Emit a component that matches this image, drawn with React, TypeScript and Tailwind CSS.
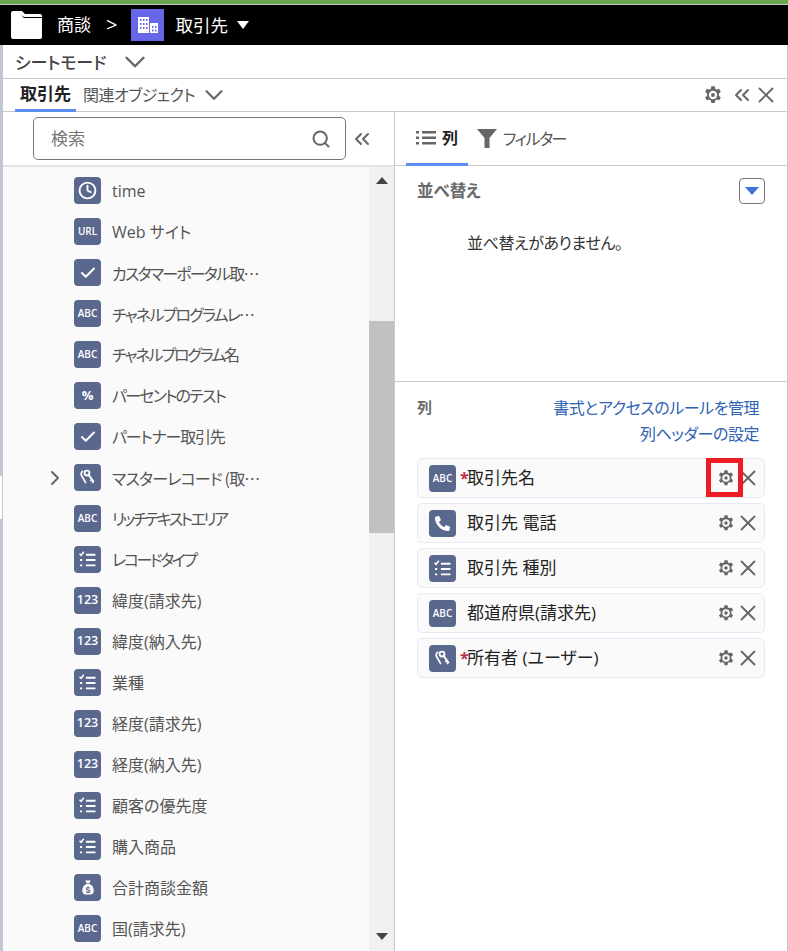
import { Check, ChevronDown, ChevronRight, ChevronsLeft, Clock, Search, X } from 'lucide-react';
import { FaPhoneAlt } from 'react-icons/fa';

function Gear({ className }: { className: string }) {
  return (
    <svg viewBox="0 0 24 24" className={className} fill="currentColor">
      <path
        fillRule="evenodd"
        d="M10 1.5h4l.6 3 1.9 1.1 2.9-1 2 3.5-2.3 2v2.8l2.3 2-2 3.5-2.9-1-1.9 1.1-.6 3h-4l-.6-3-1.9-1.1-2.900 1-2-3.5 2.300-2v-2.800l-2.300-2 2-3.500 2.900 1 1.900-1.100zM12 7a5 5 0 1 0 0 10 5 5 0 0 0 0-10zM12 9.700a2.300 2.300 0 1 1 0 4.600 2.300 2.300 0 0 1 0-4.600z"
      />
    </svg>
  );
}

function PicklistIcon() {
  return (
    <svg viewBox="0 0 16 16" className="w-[17px] h-[17px]" fill="none" stroke="white">
      <path d="M0.5 2.5l1.500 1.500 2.500-3.300" strokeWidth="1.400" />
      <path d="M6.500 3.500h9M6.500 8.500h9M6.500 13.500h9" strokeWidth="1.800" />
      <path d="M1 8.500h2M1 13.500h2" strokeWidth="1.800" />
    </svg>
  );
}

function KeyIcon() {
  return (
    <svg viewBox="0 0 16 16" className="w-[17px] h-[17px]" fill="none" stroke="white">
      <circle cx="7.500" cy="3.800" r="2.300" strokeWidth="1.800" />
      <path d="M9 5.500l5 6.800M12.200 9.800l-1.700 1.200M13.600 11.700l-1.500 1.200" strokeWidth="1.700" />
      <path d="M3.800 1.800c-2.200 1.500-2.200 3.500-1 5l3.700 6.500" strokeWidth="1.600" />
    </svg>
  );
}

function MoneyIcon() {
  return (
    <svg viewBox="0 0 16 18" className="w-[14px] h-[17px]">
      <path d="M5 1h6l-1.300 3h-3.400z" fill="white" />
      <path d="M6 5h4c3 1.500 4.500 4.500 4.500 7.500 0 3-1.500 4.500-3.500 4.500h-6c-2 0-3.500-1.500-3.500-4.500 0-3 1.500-6 4.500-7.500z" fill="white" />
      <text x="8" y="15" textAnchor="middle" fontSize="10" fontWeight="700" fill="#5a688e" fontFamily="Liberation Sans, sans-serif">$</text>
    </svg>
  );
}

type Kind = 'time' | 'url' | 'check' | 'abc' | 'pct' | 'key' | 'pick' | 'num' | 'money' | 'phone';

function FieldIcon({ kind }: { kind: Kind }) {
  let inner: React.ReactNode = null;
  if (kind === 'time') inner = <Clock className="w-[19px] h-[19px] text-white" strokeWidth={2.4} />;
  if (kind === 'url') inner = <span className="text-[10px] font-semibold text-white">URL</span>;
  if (kind === 'check') inner = <Check className="w-[18px] h-[18px] text-white" strokeWidth={2.6} />;
  if (kind === 'abc') inner = <span className="text-[10px] font-semibold text-white">ABC</span>;
  if (kind === 'pct') inner = <span className="text-[13px] font-bold text-white">%</span>;
  if (kind === 'num') inner = <span className="text-[12.5px] font-semibold text-white">123</span>;
  if (kind === 'key') inner = <KeyIcon />;
  if (kind === 'pick') inner = <PicklistIcon />;
  if (kind === 'money') inner = <MoneyIcon />;
  if (kind === 'phone') inner = <FaPhoneAlt className="w-[15px] h-[15px] text-white" />;
  return (
    <div className="w-[27px] h-[27px] shrink-0 rounded-[4px] bg-[#5a688e] flex items-center justify-center font-['Open_Sans',sans-serif] tracking-normal">
      {inner}
    </div>
  );
}

const fields: { kind: Kind; label: string; arrow?: boolean; tight?: string }[] = [
  { kind: 'time', label: 'time' },
  { kind: 'url', label: 'Web サイト' },
  { kind: 'check', label: 'カスタマーポータル取…', tight: "tracking-[-1.8px] font-['Noto_Sans_CJK_JP',sans-serif]" },
  { kind: 'abc', label: 'チャネルプログラムレ…', tight: "tracking-[-1.8px] font-['Noto_Sans_CJK_JP',sans-serif]" },
  { kind: 'abc', label: 'チャネルプログラム名', tight: 'tracking-[-2.1px]' },
  { kind: 'pct', label: 'パーセントのテスト', tight: 'tracking-[-1.8px]' },
  { kind: 'check', label: 'パートナー取引先', tight: 'tracking-[-1.2px]' },
  { kind: 'key', label: 'マスターレコード (取…', arrow: true, tight: "tracking-[-0.8px] font-['Noto_Sans_CJK_JP',sans-serif]" },
  { kind: 'abc', label: 'リッチテキストエリア', tight: 'tracking-[-2.5px]' },
  { kind: 'pick', label: 'レコードタイプ', tight: 'tracking-[-2.4px]' },
  { kind: 'num', label: '緯度(請求先)' },
  { kind: 'num', label: '緯度(納入先)' },
  { kind: 'pick', label: '業種' },
  { kind: 'num', label: '経度(請求先)' },
  { kind: 'num', label: '経度(納入先)' },
  { kind: 'pick', label: '顧客の優先度' },
  { kind: 'pick', label: '購入商品' },
  { kind: 'money', label: '合計商談金額' },
  { kind: 'abc', label: '国(請求先)' },
];

const columns: { kind: Kind; label: string; req?: boolean }[] = [
  { kind: 'abc', label: '取引先名', req: true },
  { kind: 'phone', label: '取引先 電話' },
  { kind: 'pick', label: '取引先 種別' },
  { kind: 'abc', label: '都道府県(請求先)' },
  { kind: 'key', label: '所有者 (ユーザー)', req: true },
];

export default function App() {
  return (
    <div className="w-[788px] h-[951px] overflow-hidden bg-white flex flex-col font-['Open_Sans','Noto_Sans_CJK_JP',sans-serif] [font-feature-settings:'palt'] text-[#444]">
      <div className="h-[4px] bg-[#6aa84f]" />
      <div className="h-px bg-[#c9c9c9]" />
      <div className="h-[40px] bg-black flex items-center text-white text-[17px]">
        <svg viewBox="0 0 31 28" className="w-[31px] h-[28px] ml-[11px]" fill="white">
          <path d="M2 0h9l3 3h15a2 2 0 0 1 2 2v1h-18l-3-2h-8zM0 2a2 2 0 0 1 2-2v4h8l3 3h18v19a2 2 0 0 1-2 2h-27a2 2 0 0 1-2-2z" />
        </svg>
        <span className="ml-[15px]">商談</span>
        <span className="ml-[15px] text-[20px] leading-none">&gt;</span>
        <div className="ml-[14px] w-[33px] h-[32px] bg-[#6666e6] flex items-center justify-center">
          <svg viewBox="0 0 20 16" className="w-[20px] h-[16px]" fill="white">
            <path d="M0 0h11v16h-11zM12 6h8v10h-8z" />
            <path
              d="M2 2h1.500v2h-1.500zM5 2h1.500v2h-1.500zM8 2h1.500v2h-1.500zM2 6h1.500v2h-1.500zM5 6h1.500v2h-1.500zM8 6h1.500v2h-1.500zM2 10h1.500v2h-1.500zM5 10h1.500v2h-1.500zM8 10h1.500v2h-1.500zM14 9h1.500v2h-1.500zM17 9h1.500v2h-1.500zM14 12.500h1.500v2h-1.500zM17 12.500h1.500v2h-1.500z"
              fill="#6666e6"
            />
          </svg>
        </div>
        <span className="ml-[11px] text-[17.5px]">取引先</span>
        <div className="ml-[9px] w-0 h-0 border-x-[6px] border-x-transparent border-t-[8px] border-t-white" />
      </div>

      <div className="flex-1 min-h-0 flex flex-col border-l-[3px] border-l-[#c0c6d2] border-r border-r-[#c9c9c9] relative">
        <div className="absolute -left-[3px] top-[431px] w-[2px] h-[43px] bg-white" />
        <div className="h-[34px] flex items-center border-b border-[#c9c9c9] pl-[12px] pt-[3px] shrink-0">
          <span className="text-[17px] font-medium text-[#444] tracking-[-0.1px]">シートモード</span>
          <ChevronDown className="w-[34px] h-[34px] ml-[12px] text-[#666] -mt-[3px]" strokeWidth={1.7} />
        </div>
        <div className="h-[33px] flex items-stretch border-b border-[#c9c9c9] pl-[12px] pr-[8px] shrink-0">
          <div className="px-[5px] flex items-center border-b-[3px] border-[#5b8def] text-[17px] font-bold text-[#222] -mb-px">取引先</div>
          <div className="ml-[7px] flex items-center text-[16px] text-[#555] tracking-[-0.5px]">関連オブジェクト</div>
          <div className="flex items-center">
            <ChevronDown className="w-[30px] h-[30px] ml-[4px] text-[#666]" strokeWidth={1.7} />
          </div>
          <div className="ml-auto flex items-center text-[#666]">
            <Gear className="w-[20px] h-[20px] mr-[7px]" />
            <ChevronsLeft className="w-[24px] h-[24px]" strokeWidth={2} />
            <X className="w-[26px] h-[26px] -ml-px" strokeWidth={1.7} />
          </div>
        </div>

        <div className="flex-1 min-h-0 flex">
          <div className="w-[392px] shrink-0 border-r border-[#c9c9c9] flex flex-col">
            <div className="h-[55px] shrink-0 flex items-center pl-[30px] border-b-2 border-[#e4e4e4]">
              <div className="w-[313px] h-[43px] border border-[#777] rounded-[5px] flex items-center pl-[17px] pr-[14px]">
                <span className="text-[#777] text-[17px]">検索</span>
                <Search className="ml-auto w-[20px] h-[20px] text-[#666]" strokeWidth={2.4} />
              </div>
              <ChevronsLeft className="ml-[4px] w-[24px] h-[24px] text-[#666]" strokeWidth={2} />
            </div>
            <div className="flex-1 min-h-0 flex bg-[#fafafa]">
              <div className="w-[366px] overflow-hidden pt-[3px]">
                {fields.map((f) => (
                  <div key={f.label} className="h-[41px] flex items-center gap-[11px] pl-[71px] relative">
                    {f.arrow && <ChevronRight className="absolute left-[40px] w-[24px] h-[24px] text-[#666]" strokeWidth={2} />}
                    <FieldIcon kind={f.kind} />
                    <span className={`text-[16px] text-[#555] whitespace-nowrap ${f.tight ?? ''}`}>{f.label}</span>
                  </div>
                ))}
              </div>
              <div className="w-[25px] bg-[#f1f1f1] flex flex-col items-center">
                <div className="mt-[10px] w-0 h-0 border-x-[6px] border-x-transparent border-b-[7px] border-b-[#444]" />
                <div className="mt-[137px] w-full h-[212px] bg-[#c1c1c1]" />
                <div className="mt-auto mb-[11px] w-0 h-0 border-x-[6px] border-x-transparent border-t-[7px] border-t-[#444]" />
              </div>
            </div>
          </div>

          <div className="flex-1 min-w-0 flex flex-col">
            <div className="h-[54px] shrink-0 border-b border-[#c9c9c9] flex items-stretch pl-[11px]">
              <div className="w-[62px] flex items-center justify-center gap-[6px] border-b-[3px] border-[#5b8def] -mb-px">
                <svg viewBox="0 0 20 14" className="w-[20px] h-[14px]" fill="#666">
                  <path d="M0 0h3v2.500h-3zM6 0h14v2.500h-14zM0 5.500h3v2.500h-3zM6 5.500h14v2.500h-14zM0 11h3v2.500h-3zM6 11h14v2.500h-14z" />
                </svg>
                <span className="text-[16px] font-bold text-[#222]">列</span>
              </div>
              <div className="ml-[9px] flex items-center">
                <svg viewBox="0 0 20 19" className="w-[20px] h-[19px]" fill="#666">
                  <path d="M0 0h20l-7.500 9v10h-5v-10z" />
                </svg>
                <span className="ml-[6px] text-[16px] text-[#555] tracking-[-1.4px]">フィルター</span>
              </div>
            </div>

            <div className="h-[216px] shrink-0 border-b border-[#c9c9c9] pl-[22px] pr-[22px]">
              <div className="pt-[12px] flex items-center justify-between">
                <span className="text-[16.5px] font-bold text-[#6b6b6b]">並べ替え</span>
                <div className="w-[26px] h-[26px] border border-[#777] rounded-[4px] flex items-center justify-center">
                  <div className="w-0 h-0 border-x-[7px] border-x-transparent border-t-[8px] border-t-[#3f73d8]" />
                </div>
              </div>
              <p className="mt-[27px] ml-[50px] text-[16px] text-[#333] tracking-[-0.4px]">並べ替えがありません。</p>
            </div>

            <div className="flex-1 pt-[13px] pl-[22px] pr-[22px]">
              <div className="flex justify-between">
                <span className="text-[15px] font-bold text-[#6b6b6b] mt-[1px]">列</span>
                <div className="flex flex-col items-end text-[16px] leading-[26px] text-[#2f62b5] mr-[6px] tracking-[-0.45px]">
                  <span>書式とアクセスのルールを管理</span>
                  <span>列ヘッダーの設定</span>
                </div>
              </div>
              <div className="mt-[11px] flex flex-col gap-[5px]">
                {columns.map((c, i) => (
                  <div key={c.label} className="h-[40px] rounded-[5px] border border-[#e9e9f3] bg-[#fafafa] flex items-center pl-[11px] pr-[3px] relative">
                    <FieldIcon kind={c.kind} />
                    <span className="w-[7px] ml-[4px] text-[#c0304a] text-[16px] font-bold leading-none">{c.req ? '*' : ''}</span>
                    <span className="text-[17px] text-[#222] whitespace-nowrap">{c.label}</span>
                    <Gear className="ml-auto w-[18px] h-[18px] text-[#666]" />
                    <X className="w-[26px] h-[26px] text-[#666]" strokeWidth={1.7} />
                    {i === 0 && <div className="absolute left-[288px] -top-px w-[37px] h-[39px] border-[5px] border-[#ed1c24]" />}
                  </div>
                ))}
              </div>
            </div>
          </div>
        </div>
      </div>
    </div>
  );
}
